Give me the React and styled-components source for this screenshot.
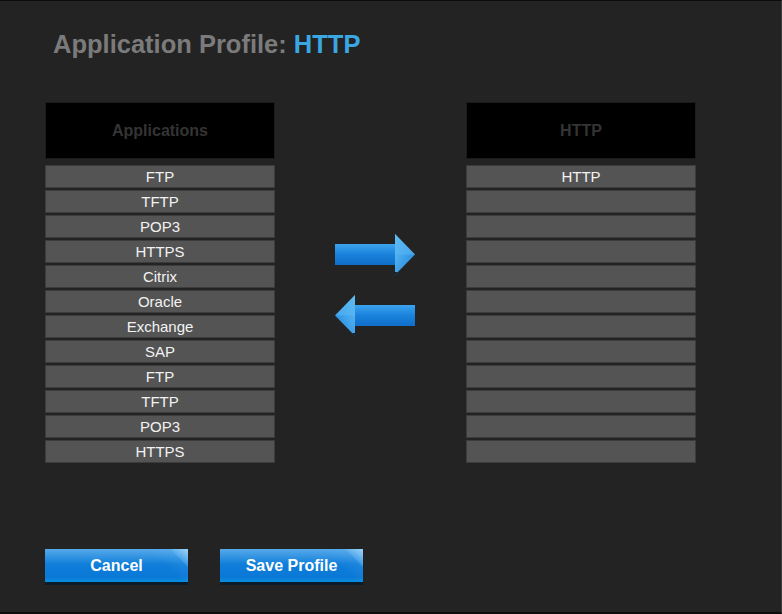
import styled, { createGlobalStyle } from "styled-components";

const Global = createGlobalStyle`
  html, body {
    margin: 0;
    padding: 0;
    background: #232323;
  }
  body {
    font-family: "Liberation Sans", Arial, sans-serif;
  }
`;

const Screen = styled.div`
  width: 782px;
  height: 614px;
  box-sizing: border-box;
  background: #232323;
  border-top: 1px solid #0c0c0c;
  border-bottom: 2px solid #0c0c0c;
  border-right: 1px solid #3a3a3a;
  padding: 0 0 0 45px;
  overflow: hidden;
`;

const Title = styled.h1`
  margin: 0;
  padding: 28px 0 0 8px;
  height: 74px;
  box-sizing: border-box;
  font-size: 25.5px;
  line-height: 30px;
  font-weight: bold;
  color: #7b7b7b;

  span {
    color: #3ba7e2;
  }
`;

const Lists = styled.div`
  display: flex;
  align-items: flex-start;
  margin-top: 27px;
`;

const Panel = styled.div`
  width: 230px;
  display: flex;
  flex-direction: column;
  gap: 2px;
`;

const PanelHead = styled.div`
  height: 57px;
  margin-bottom: 4px;
  box-sizing: border-box;
  background: #000;
  border: 1px solid #1b1b1b;
  display: flex;
  align-items: center;
  justify-content: center;
  font-size: 16px;
  font-weight: bold;
  color: #343434;
`;

const Row = styled.div`
  height: 23px;
  box-sizing: border-box;
  background: #545454;
  border: 1px solid #3c3c3c;
  display: flex;
  align-items: center;
  justify-content: center;
  padding-bottom: 1px;
  font-size: 15px;
  color: #f2f2f2;
`;

const Arrows = styled.div`
  width: 80px;
  margin: 0 51px 0 60px;
  padding-top: 132px;
  display: flex;
  flex-direction: column;
  gap: 20px;
`;

const ArrowBtn = styled.button`
  width: 80px;
  height: 41px;
  padding: 0;
  border: 0;
  background: none;
  cursor: pointer;
  svg {
    display: block;
  }
`;

const Actions = styled.div`
  display: flex;
  gap: 32px;
  margin-top: 86px;
`;

const BlueButton = styled.button`
  position: relative;
  width: 143px;
  height: 33px;
  border: 0;
  padding: 0;
  background: linear-gradient(180deg, #2b93e4 0%, #0f7dd9 50%, #0a78d6 85%, #0a8ede 100%);
  box-shadow: 0 3px 0 #0a1b2a;
  color: #fff;
  font-family: "Liberation Sans", Arial, sans-serif;
  font-size: 16px;
  font-weight: bold;
  overflow: hidden;
  cursor: pointer;

  &::before {
    content: "";
    position: absolute;
    inset: 0;
    background: linear-gradient(180deg, rgba(255, 255, 255, 0.2) 0%, rgba(255, 255, 255, 0) 45%);
  }

  &::after {
    content: "";
    position: absolute;
    inset: 0;
    background: linear-gradient(
      225deg,
      rgba(190, 228, 255, 0.7) 0px,
      rgba(120, 195, 250, 0.4) 12px,
      rgba(120, 195, 250, 0.12) 13px,
      rgba(120, 195, 250, 0) 28px
    );
  }

  span {
    position: relative;
    z-index: 1;
  }
`;

const Arrow = ({ left }) => (
  <svg width="80" height="41" viewBox="0 0 80 41">
    <defs>
      <linearGradient id={left ? "al" : "ar"} x1="0" y1="0" x2="0" y2="1">
        <stop offset="0" stopColor="#3da4ee" />
        <stop offset="0.5" stopColor="#1a82dc" />
        <stop offset="1" stopColor="#0f6ec8" />
      </linearGradient>
      <linearGradient id={left ? "hl" : "hr"} x1="0" y1="0" x2="1" y2="1">
        <stop offset="0" stopColor="#68c2f7" />
        <stop offset="1" stopColor="#1a82dc" />
      </linearGradient>
    </defs>
    <g transform={left ? "translate(80 0) scale(-1 1)" : undefined}>
      <rect x="0" y="10" width="62" height="21" fill={`url(#${left ? "al" : "ar"})`} />
      <polygon points="60,0 80,20.5 60,41" fill={`url(#${left ? "hl" : "hr"})`} />
      <polygon points="60,0 80,20.5 60,20.5" fill="#58b6f2" opacity="0.55" />
      <polygon points="60,38 63,38 60,41" fill="#0b2233" />
    </g>
  </svg>
);

const apps = ["FTP", "TFTP", "POP3", "HTTPS", "Citrix", "Oracle", "Exchange", "SAP", "FTP", "TFTP", "POP3", "HTTPS"];
const selected = ["HTTP"];

export default function App() {
  return (
    <>
      <Global />
      <Screen>
        <Title>
          Application Profile: <span>HTTP</span>
        </Title>
        <Lists>
          <Panel>
            <PanelHead>Applications</PanelHead>
            {apps.map((a, i) => (
              <Row key={i}>{a}</Row>
            ))}
          </Panel>
          <Arrows>
            <ArrowBtn aria-label="add">
              <Arrow />
            </ArrowBtn>
            <ArrowBtn aria-label="remove">
              <Arrow left />
            </ArrowBtn>
          </Arrows>
          <Panel>
            <PanelHead>HTTP</PanelHead>
            {apps.map((_, i) => (
              <Row key={i}>{selected[i] || ""}</Row>
            ))}
          </Panel>
        </Lists>
        <Actions>
          <BlueButton>
            <span>Cancel</span>
          </BlueButton>
          <BlueButton>
            <span>Save Profile</span>
          </BlueButton>
        </Actions>
      </Screen>
    </>
  );
}
